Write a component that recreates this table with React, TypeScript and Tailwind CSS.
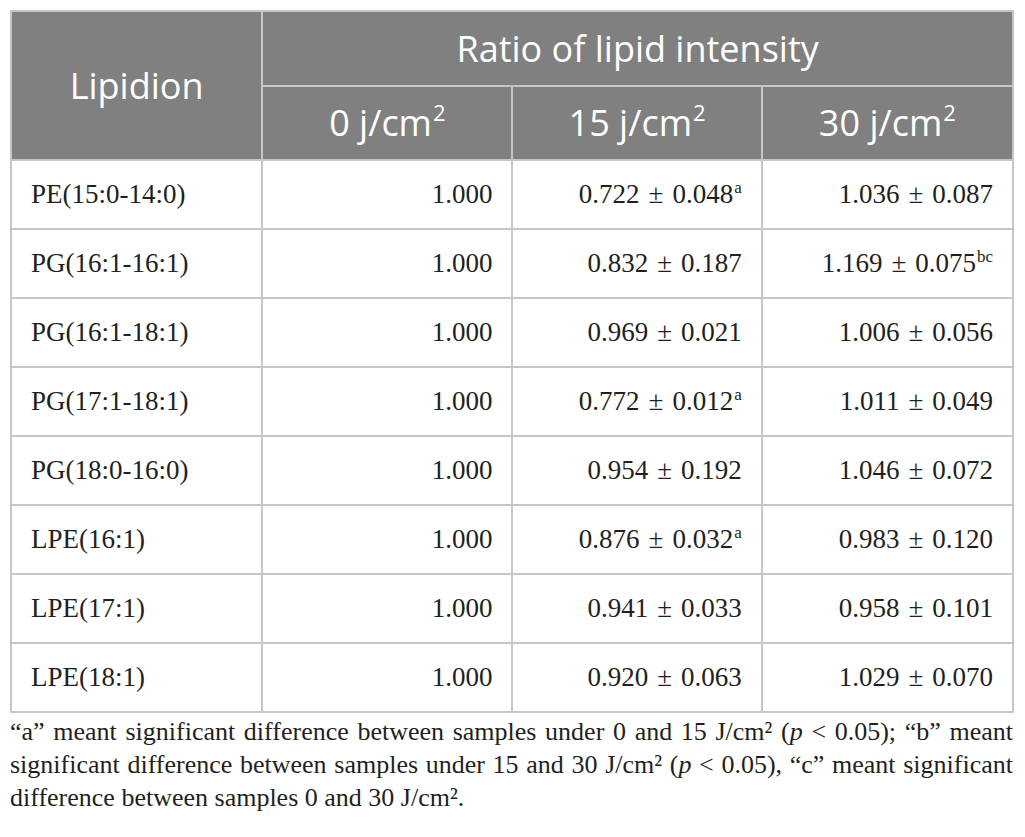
const rows: { name: string; c0: string; c15: string; s15?: string; c30: string; s30?: string }[] = [
  { name: "PE(15:0-14:0)", c0: "1.000", c15: "0.722 ± 0.048", s15: "a", c30: "1.036 ± 0.087" },
  { name: "PG(16:1-16:1)", c0: "1.000", c15: "0.832 ± 0.187", c30: "1.169 ± 0.075", s30: "bc" },
  { name: "PG(16:1-18:1)", c0: "1.000", c15: "0.969 ± 0.021", c30: "1.006 ± 0.056" },
  { name: "PG(17:1-18:1)", c0: "1.000", c15: "0.772 ± 0.012", s15: "a", c30: "1.011 ± 0.049" },
  { name: "PG(18:0-16:0)", c0: "1.000", c15: "0.954 ± 0.192", c30: "1.046 ± 0.072" },
  { name: "LPE(16:1)", c0: "1.000", c15: "0.876 ± 0.032", s15: "a", c30: "0.983 ± 0.120" },
  { name: "LPE(17:1)", c0: "1.000", c15: "0.941 ± 0.033", c30: "0.958 ± 0.101" },
  { name: "LPE(18:1)", c0: "1.000", c15: "0.920 ± 0.063", c30: "1.029 ± 0.070" },
];

function Unit({ n }: { n: string }) {
  return (
    <>
      {n} j/cm<sup className="text-[22px] relative -top-[15px] ml-[1px]">2</sup>
    </>
  );
}

// the ± gets a little extra room, as in the typeset table
function Value({ v, s }: { v: string; s?: string }) {
  const [a, b] = v.split(" ± ");
  return (
    <>
      {a}
      <span className="mx-[9px]">±</span>
      {b}
      {s && <sup className="text-[17px] relative -top-[10px] ml-[1px]">{s}</sup>}
    </>
  );
}

export default function App() {
  const head = "border-2 border-[#c6c6c6] bg-[#808080] text-white font-normal text-center";
  const cell = "border-2 border-[#c6c6c6] px-[19px] text-[27px]";

  return (
    <div className="bg-white w-[1025px] h-[837px] pl-[10px] pt-[10px] text-[#231f20]">
      <table
        className="border-collapse table-fixed w-[1004px]"
        style={{ fontFamily: '"Open Sans", sans-serif' }}
      >
        <colgroup>
          <col className="w-[251px]" />
          <col className="w-[250px]" />
          <col className="w-[249px]" />
          <col className="w-[251px]" />
        </colgroup>
        <thead className="text-[36px]">
          <tr className="h-[75px]">
            <th rowSpan={2} className={head}>
              Lipidion
            </th>
            <th colSpan={3} className={head}>
              Ratio of lipid intensity
            </th>
          </tr>
          <tr className="h-[74px]">
            <th className={head}>
              <Unit n="0" />
            </th>
            <th className={head}>
              <Unit n="15" />
            </th>
            <th className={head}>
              <Unit n="30" />
            </th>
          </tr>
        </thead>
        <tbody style={{ fontFamily: '"Liberation Serif", serif' }}>
          {rows.map((r) => (
            <tr key={r.name} className="h-[69px]">
              <td className={`${cell} text-left`}>{r.name}</td>
              <td className={`${cell} text-right`}>{r.c0}</td>
              <td className={`${cell} text-right`}>
                <Value v={r.c15} s={r.s15} />
              </td>
              <td className={`${cell} text-right`}>
                <Value v={r.c30} s={r.s30} />
              </td>
            </tr>
          ))}
        </tbody>
      </table>
      <p
        className="w-[1003px] text-justify text-[26px] leading-[33px] mt-[2px]"
        style={{ fontFamily: '"Liberation Serif", serif' }}
      >
        “a” meant significant difference between samples under 0 and 15 J/cm² (<i>p</i> &lt; 0.05); “b” meant
        significant difference between samples under 15 and 30 J/cm² (<i>p</i> &lt; 0.05), “c” meant significant
        difference between samples 0 and 30 J/cm².
      </p>
    </div>
  );
}
